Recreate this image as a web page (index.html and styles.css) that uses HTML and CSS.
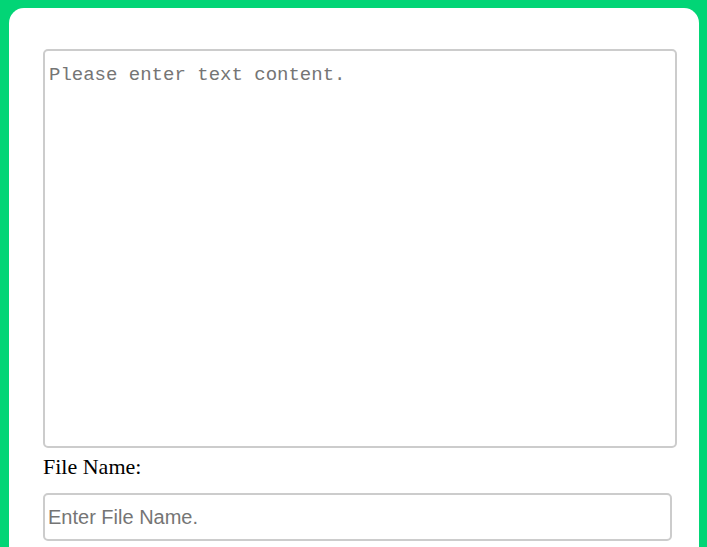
FILE: index.html
```html
<!DOCTYPE html>
<html lang="en">
<head>
<meta charset="utf-8">
<title>Text to File</title>
<link rel="stylesheet" href="styles.css">
</head>
<body>
<div class="card">
  <textarea class="content" placeholder="Please enter text content." autofocus></textarea>
  <label class="label" for="fname">File Name:</label>
  <input class="fname" id="fname" type="text" placeholder="Enter File Name.">
</div>
</body>
</html>
```
FILE: styles.css
```css
html, body {
  margin: 0;
  padding: 0;
  background: #02d576;
  height: 100%;
  overflow: hidden;
}
.card {
  margin: 8px 8px 0 9px;
  background: #ffffff;
  border-radius: 15px 15px 0 0;
  padding: 41px 23px 0 34px;
  height: calc(100vh - 8px);
  box-sizing: border-box;
  overflow: hidden;
}
.content {
  display: block;
  box-sizing: border-box;
  width: 634px;
  height: 399px;
  margin: 0;
  border: 2px solid #cccccc;
  border-radius: 5px;
  padding: 12px 4px;
  font-family: "Liberation Mono", "DejaVu Sans Mono", monospace;
  font-size: 19px;
  line-height: 24px;
  color: #222;
  resize: none;
  outline: none;
}
.content::placeholder {
  color: #757575;
}
.label {
  display: block;
  margin-top: 6px;
  font-family: "Liberation Serif", "Times New Roman", serif;
  font-size: 22px;
  line-height: 25px;
  color: #000;
}
.fname {
  display: block;
  box-sizing: border-box;
  margin-top: 14px;
  width: 629px;
  height: 48px;
  border: 2px solid #cccccc;
  border-radius: 5px;
  padding: 0 3px;
  font-family: "Liberation Sans", Arial, sans-serif;
  font-size: 20px;
  color: #222;
  outline: none;
}
.fname::placeholder {
  color: #757575;
}
```
